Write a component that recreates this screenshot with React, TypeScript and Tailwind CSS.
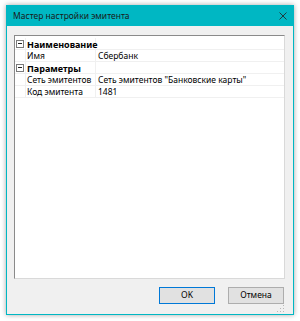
const rows = [
  { type: "cat", label: "Наименование" },
  { type: "prop", name: "Имя", value: "Сбербанк" },
  { type: "cat", label: "Параметры" },
  { type: "prop", name: "Сеть эмитентов", value: "Сеть эмитентов \"Банковские карты\"" },
  { type: "prop", name: "Код эмитента", value: "1481" },
];

function Collapse() {
  return (
    <div className="flex h-[8px] w-[8px] items-center justify-center border border-[#7a7a7a] bg-white">
      <div className="h-px w-[4px] bg-[#222]" />
    </div>
  );
}

export default function App() {
  return (
    <div
      className="h-[321px] w-[300px] overflow-hidden bg-white pl-[6px] pt-[5px] text-[8.5px] text-black"
      style={{ fontFamily: '"Noto Sans", "Liberation Sans", sans-serif' }}
    >
      <div className="flex h-[310px] w-[288px] flex-col border border-[#00b7c3] bg-[#f0f0f0] shadow-[0_0_5px_rgba(0,0,0,0.35)]">
        <div className="flex h-[20px] shrink-0 items-center justify-between bg-[#00b7c3] pl-[6px] pr-[6px]">
          <span className="whitespace-nowrap text-[8.5px] text-[#1a1a1a]">Мастер настройки эмитента</span>
          <svg width="8" height="8" viewBox="0 0 8 8">
            <path d="M0.5 0.5 L7.5 7.5 M7.5 0.5 L0.5 7.5" stroke="#1f3b3e" strokeWidth="1" />
          </svg>
        </div>

        <div className="flex flex-1 flex-col pl-[7px] pr-[8px] pt-[9px]">
          <div className="h-[244px] border border-[#8a8a8a] border-r-[#d9d9d9] border-b-[#d9d9d9] bg-white pt-[2px]">
            {rows.map((r, i) =>
              r.type === "cat" ? (
                <div key={i} className="flex h-[12px] border-b border-[#f0f0f0]">
                  <div className="flex w-[10px] shrink-0 items-center justify-end pr-px">
                    <Collapse />
                  </div>
                  <div className="flex w-[71px] shrink-0 items-center whitespace-nowrap border-l border-r border-[#f0f0f0] pl-[1px] pt-px text-[9px] font-bold leading-none">
                    {r.label}
                  </div>
                  <div className="flex-1" />
                </div>
              ) : (
                <div key={i} className="flex h-[12px] border-b border-[#f0f0f0]">
                  <div className="w-[10px] shrink-0" />
                  <div className="flex w-[71px] shrink-0 items-center overflow-hidden whitespace-nowrap border-l border-r border-[#f0f0f0] pl-[1px] pt-px leading-none">
                    {r.name}
                  </div>
                  <div className="flex flex-1 items-center whitespace-nowrap pl-[2px] pt-px leading-none">{r.value}</div>
                </div>
              )
            )}
          </div>

          <div className="mt-[8px] flex justify-end gap-[13px] pr-px">
            <button className="flex h-[17px] w-[56px] items-center justify-center border border-[#0078d7] bg-[#e1e1e1] text-[8.5px] leading-none">
              OK
            </button>
            <button className="flex h-[17px] w-[56px] items-center justify-center border border-[#adadad] bg-[#e1e1e1] text-[8.5px] leading-none">
              Отмена
            </button>
          </div>

          <div className="flex flex-1 items-end justify-end pb-px">
            <svg width="8" height="8" viewBox="0 0 8 8">
              <rect x="6" y="0" width="1" height="1" fill="#b8b8b8" />
              <rect x="3" y="3" width="1" height="1" fill="#b8b8b8" />
              <rect x="6" y="3" width="1" height="1" fill="#b8b8b8" />
              <rect x="0" y="6" width="1" height="1" fill="#b8b8b8" />
              <rect x="3" y="6" width="1" height="1" fill="#b8b8b8" />
              <rect x="6" y="6" width="1" height="1" fill="#b8b8b8" />
            </svg>
          </div>
        </div>
      </div>
    </div>
  );
}
